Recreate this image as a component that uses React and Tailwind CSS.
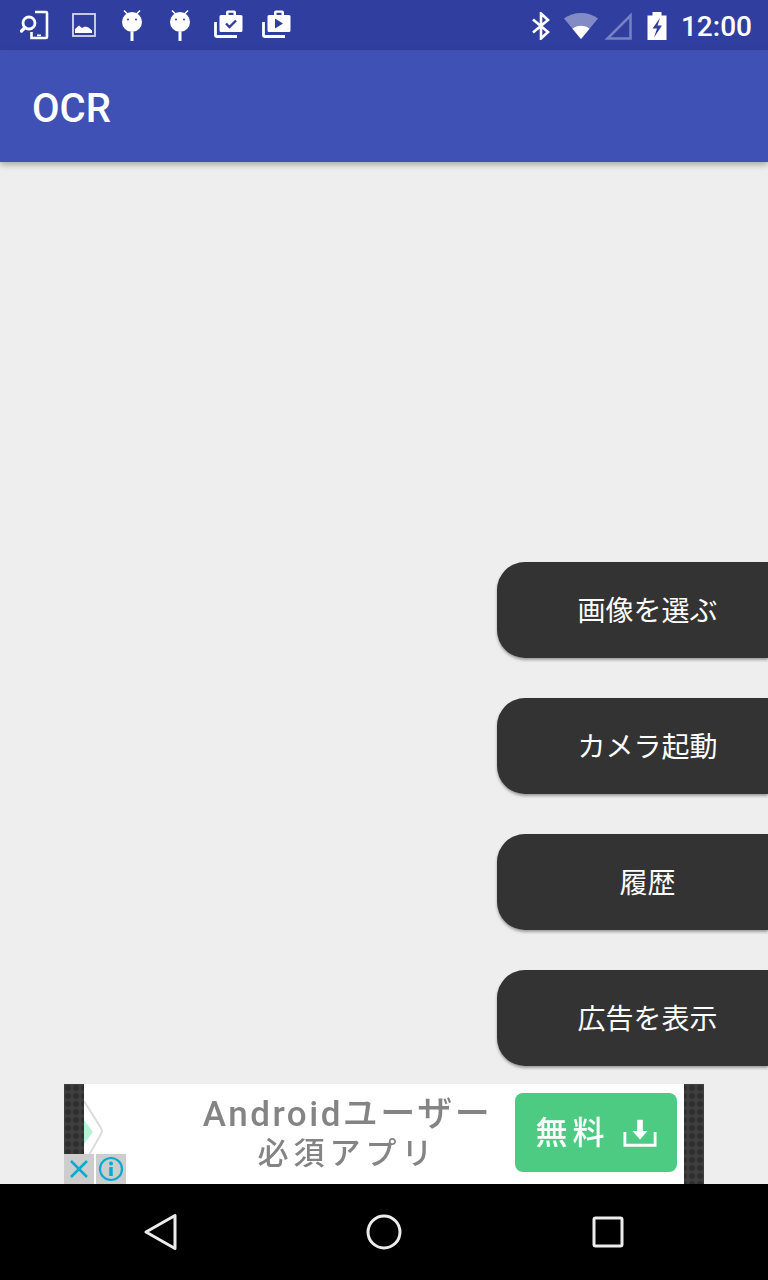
const BUTTONS = ["画像を選ぶ", "カメラ起動", "履歴", "広告を表示"];

function PhoneSearch() {
  return (
    <svg viewBox="20 9 32 32" className="w-8 h-8" fill="none" stroke="#fff">
      <path d="M35 12h11a1 1 0 0 1 1 1v24a1 1 0 0 1-1 1H31.500v-6" strokeWidth="2.600" />
      <rect x="37" y="34.500" width="4" height="1.800" fill="#fff" stroke="none" />
      <circle cx="29" cy="23" r="6" strokeWidth="2.800" />
      <path d="M25 27.500l-3.500 3.500" strokeWidth="3.200" strokeLinecap="round" />
    </svg>
  );
}

function ImageIcon() {
  return (
    <svg viewBox="68 9 32 32" className="w-8 h-8">
      <rect x="73" y="14" width="22" height="22" fill="none" stroke="#d5d8e8" strokeWidth="1.800" />
      <path d="M75 33v-4l4-3.500 3 2.500 3-1.500 3.500 1 3.500 3v2.500z" fill="#fff" />
    </svg>
  );
}

function Lollipop() {
  return (
    <svg viewBox="116 9 32 32" className="w-8 h-8">
      <path d="M124 10.500l3.500 3.500M140 10.500l-3.500 3.500" stroke="#fff" strokeWidth="1.500" />
      <circle cx="132" cy="22" r="10" fill="#fff" />
      <circle cx="128" cy="19.500" r="1" fill="#303f9f" />
      <circle cx="136" cy="19.500" r="1" fill="#303f9f" />
      <rect x="130.500" y="32" width="3" height="9" fill="#fff" />
    </svg>
  );
}

function Bag({ play }) {
  return (
    <svg viewBox="212 9 32 32" className="w-8 h-8">
      <path d="M215.500 22v13.500a1 1 0 0 0 1 1H237" fill="none" stroke="#fff" strokeWidth="2.800" />
      <path d="M221 15h5v-2.500a2 2 0 0 1 2-2h6a2 2 0 0 1 2 2V15h5a1.500 1.500 0 0 1 1.500 1.500v14a1.500 1.500 0 0 1-1.500 1.500h-20a1.500 1.500 0 0 1-1.500-1.500v-14A1.500 1.500 0 0 1 221 15zm7.500 0h5v-2.200h-5z" fill="#fff" fillRule="evenodd" />
      {play
        ? <path d="M227 18.500v10l8-5z" fill="#303f9f" />
        : <path d="M226 23.500l3.500 3.500 6.500-6.500" fill="none" stroke="#303f9f" strokeWidth="2.400" />}
    </svg>
  );
}

function StatusRight() {
  return (
    <>
      <svg viewBox="1 0 18 28" className="w-[18px] h-7 mr-[13px]" fill="none" stroke="#fff" strokeWidth="2.600">
        <path d="M2 7.500l15 12.500-7 6.500V1.500l7 6.500-15 12.500" />
      </svg>
      <svg viewBox="0 0 36 28" className="w-9 h-7 mr-[3px]">
        <path d="M18 27L1 6.500C5.500 3 11.500 1 18 1s12.500 2 17 5.500z" fill="#fff" fillOpacity="0.400" />
        <path d="M18 27l-8.500-10.300c2.300-1.800 5.300-2.900 8.500-2.900s6.200 1.100 8.500 2.900z" fill="#fff" />
      </svg>
      <svg viewBox="0 0 30 28" className="w-[30px] h-7 mr-[15px]">
        <path d="M28.500 3.500v23h-23z" fill="none" stroke="#fff" strokeOpacity="0.350" strokeWidth="2.500" />
      </svg>
      <svg viewBox="0 0 20 28" className="w-5 h-7 mr-[14px]">
        <path d="M5.500 0h9v3.500H19.500V28H.500V3.500H5.500zM13 6L5.500 16.500h4.500L7 25.500l8-12h-4.500z" fill="#fff" fillRule="evenodd" />
      </svg>
    </>
  );
}

function StatusBar() {
  return (
    <div className="h-[50px] bg-[#303f9f] flex items-center justify-between pl-3 pr-4">
      <div className="flex items-center">
        {[<PhoneSearch />, <ImageIcon />, <Lollipop />, <Lollipop />, <Bag />, <Bag play />].map((icon, i) => (
          <div key={i} className="w-12 flex justify-center">{icon}</div>
        ))}
      </div>
      <div className="flex items-center pt-[2px]">
        <StatusRight />
        <span className="pt-[2px] text-[28px] leading-none text-white font-medium">12:00</span>
      </div>
    </div>
  );
}

function AdBanner() {
  return (
    <div className="relative w-[640px] h-[100px] mx-auto flex bg-[#3a3a3a] bg-[radial-gradient(circle,#2e2e2e_2px,#404040_4px)] bg-size-[8px_8px]">
      <div className="w-[600px] h-full ml-5 bg-white flex items-center overflow-hidden">
        <svg viewBox="0 0 20 70" className="w-5 h-[70px] shrink-0 mt-[-2px]" fill="none">
          <path d="M0 3l17 27a6 6 0 0 1 0 6L0 66" stroke="#dcdcdc" strokeWidth="2" />
          <path d="M0 22l9 12-9 12z" fill="#b7f2d4" />
        </svg>
        <div className="w-[411px] pl-[76px] flex flex-col items-center text-[#848484] font-medium blur-[0.7px]">
          <span className="text-[35px] leading-[39px] tracking-[2.500px] whitespace-nowrap">Androidユーザー</span>
          <span className="text-[31px] leading-[40px] tracking-[5px] whitespace-nowrap">必須アプリ</span>
        </div>
        <div className="w-[162px] h-[79px] mb-[3px] rounded-lg bg-[#4ecb83] flex items-center justify-center gap-[13px] shrink-0">
          <span className="text-white text-[32px] font-medium tracking-[5px] blur-[0.5px] whitespace-nowrap">無料</span>
          <svg viewBox="0 0 36 32" className="w-[34px] h-8" fill="none" stroke="#fff">
            <path d="M2 15v14h32V15" strokeWidth="3" />
            <path d="M18 2v13" strokeWidth="6" />
            <path d="M10 14h16l-8 9z" fill="#fff" stroke="none" />
          </svg>
        </div>
      </div>
      <div className="absolute left-0 bottom-0 flex gap-0.5">
        <div className="w-[30px] h-[30px] bg-[#cdcdcd] flex items-center justify-center">
          <svg viewBox="0 0 22 22" className="w-[22px] h-[22px]" fill="none" stroke="#00acd1" strokeWidth="2.500">
            <path d="M3 3l16 16M19 3L3 19" />
          </svg>
        </div>
        <div className="w-[30px] h-[30px] bg-[#cdcdcd] flex items-center justify-center">
          <svg viewBox="0 0 26 26" className="w-[26px] h-[26px]" fill="none" stroke="#00acd1">
            <circle cx="13" cy="13" r="11" strokeWidth="2.200" />
            <path d="M13 11v9" strokeWidth="3.500" />
            <circle cx="13" cy="7.500" r="2" fill="#00acd1" stroke="none" />
          </svg>
        </div>
      </div>
    </div>
  );
}

export default function App() {
  return (
    <div className="w-[768px] h-[1280px] flex flex-col bg-[#eeeeee] overflow-hidden font-['Roboto','Noto_Sans_CJK_JP',sans-serif]">
      <StatusBar />
      <header className="relative h-[112px] bg-[#3f51b5] flex items-center px-8 pt-[6px] shadow-[0_3px_6px_rgba(0,0,0,0.28)]">
        <h1 className="text-[40px] leading-none font-medium text-white">OCR</h1>
      </header>

      <main className="flex-1 flex flex-col justify-end">
        <div className="flex flex-col items-end gap-10 mb-[18px]">
          {BUTTONS.map(label => (
            <button key={label}
              className="w-[271px] h-24 pl-[30px] pt-1 bg-[#333333] rounded-l-[28px] flex items-center justify-center text-white text-[28px] leading-none shadow-[0_2px_3px_rgba(0,0,0,0.35)]">
              {label}
            </button>
          ))}
        </div>
        <AdBanner />
      </main>

      <nav className="h-24 bg-black grid grid-cols-3 px-12 items-center justify-items-center">
        <svg viewBox="0 0 36 40" className="w-9 h-10" fill="none" stroke="#ececec" strokeWidth="3" strokeLinejoin="round">
          <path d="M4 20L33 3.500v33z" />
        </svg>
        <svg viewBox="0 0 36 36" className="w-9 h-9" fill="none" stroke="#ececec" strokeWidth="3">
          <circle cx="18" cy="18" r="16" />
        </svg>
        <svg viewBox="0 0 32 32" className="w-8 h-8" fill="none" stroke="#ececec" strokeWidth="3">
          <rect x="2" y="2" width="28" height="28" rx="1.500" />
        </svg>
      </nav>
    </div>
  );
}
